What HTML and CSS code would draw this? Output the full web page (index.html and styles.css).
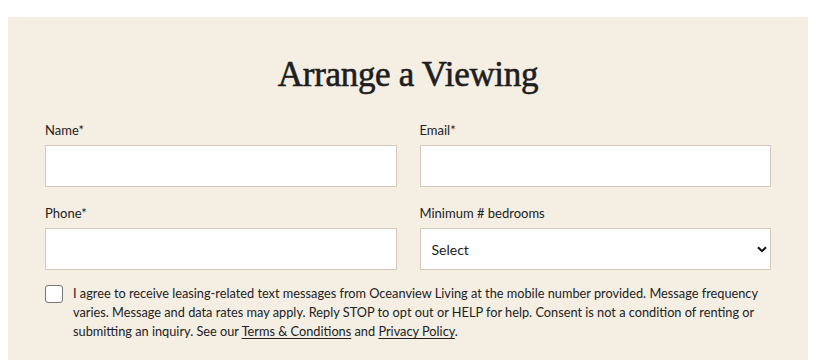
FILE: index.html
```html
<!DOCTYPE html>
<html lang="en">
<head>
<meta charset="utf-8">
<title>Arrange a Viewing</title>
<link rel="stylesheet" href="styles.css">
</head>
<body>
<section class="panel">
  <h2 class="title">Arrange a Viewing</h2>
  <form class="form">
    <div class="grid">
      <label class="field">
        <span class="label">Name*</span>
        <input class="input" type="text">
      </label>
      <label class="field">
        <span class="label">Email*</span>
        <input class="input" type="email">
      </label>
      <label class="field">
        <span class="label">Phone*</span>
        <input class="input" type="tel">
      </label>
      <label class="field">
        <span class="label">Minimum # bedrooms</span>
        <span class="select-wrap">
          <select class="input select">
            <option>Select</option>
          </select>
          <svg class="chev" width="10" height="7" viewBox="0 0 10 7"><path d="M1 1.2 L5 5.2 L9 1.2" fill="none" stroke="#111" stroke-width="2"/></svg>
        </span>
      </label>
    </div>
    <label class="consent">
      <input class="check" type="checkbox">
      <span class="consent-text">I agree to receive leasing-related text messages from Oceanview Living at the mobile number provided. Message frequency varies. Message and data rates may apply. Reply STOP to opt out or HELP for help. Consent is not a condition of renting or submitting an inquiry. See our <a href="#">Terms &amp; Conditions</a> and <a href="#">Privacy Policy</a>.</span>
    </label>
  </form>
</section>
</body>
</html>
```
FILE: styles.css
```css
html, body { margin: 0; padding: 0; background: #fff; }
body { padding: 17px 8px 0; font-family: Lato, "Open Sans", sans-serif; color: #222; }
.panel { background: #f4eee3; padding: 38px 37px 40px; height: 400px; box-sizing: border-box; }
.title { margin: 0; text-align: center; font-family: "Liberation Serif", "DejaVu Serif", serif; font-weight: normal; font-size: 35px; line-height: 40px; color: #1e1e1e; letter-spacing: -0.3px; -webkit-text-stroke: 0.6px #1e1e1e; }
.form { margin-top: 27px; }
.grid { display: grid; grid-template-columns: 1fr 1fr; column-gap: 23px; row-gap: 18px; }
.field { display: flex; flex-direction: column; }
.label { font-size: 13px; line-height: 17px; margin-bottom: 6px; color: #222; }
.input { box-sizing: border-box; height: 42px; width: 100%; border: 1px solid #d4cabb; background: #fff; border-radius: 0; margin: 0; font-family: Lato, sans-serif; font-size: 14px; color: #222; padding: 0 11px; outline: none; }
.select-wrap { position: relative; display: block; }
.select { appearance: none; -webkit-appearance: none; padding-left: 11px; }
.chev { position: absolute; right: 4px; top: 18px; pointer-events: none; }
.consent { display: flex; align-items: flex-start; gap: 10px; margin-top: 14px; }
.check { appearance: none; -webkit-appearance: none; width: 18px; height: 18px; margin: 1px 0 0; border: 1px solid #767676; border-radius: 3px; background: #fff; flex: none; box-sizing: border-box; }
.consent-text { font-size: 12.75px; line-height: 19px; color: #222; }
.consent-text a { color: #222; text-decoration: underline; text-underline-offset: 2px; }
```
